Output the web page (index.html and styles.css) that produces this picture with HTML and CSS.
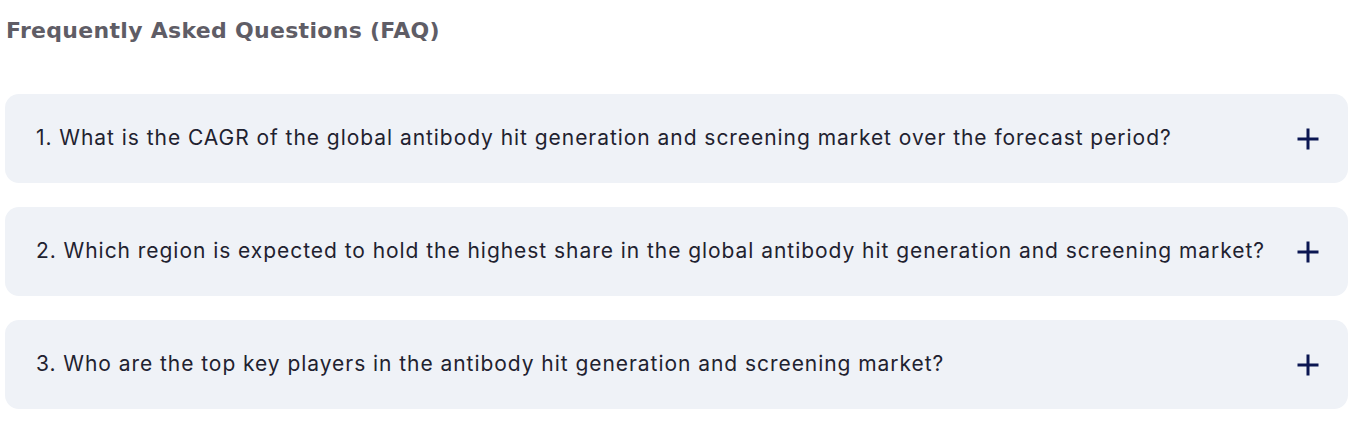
FILE: index.html
```html
<!DOCTYPE html>
<html lang="en">
<head>
    <meta charset="UTF-8">
    <meta name="viewport" content="width=device-width, initial-scale=1.0">
    <title>Frequently Asked Questions</title>
    <link rel="stylesheet" href="styles.css">
</head>
<body>
    <div class="faq">
        <h2 class="faq-title">Frequently Asked Questions (FAQ)</h2>

        <div class="faq-list">
            <div class="faq-item">
                <p class="faq-question">1. What is the CAGR of the global antibody hit generation and screening market over the forecast period?</p>
                <svg class="faq-icon" width="22" height="22" viewBox="0 0 22 22"><path d="M11 0.5V21.5M0.5 11H21.5" stroke="#0b1652" stroke-width="3"/></svg>
            </div>
            <div class="faq-item">
                <p class="faq-question">2. Which region is expected to hold the highest share in the global antibody hit generation and screening market?</p>
                <svg class="faq-icon" width="22" height="22" viewBox="0 0 22 22"><path d="M11 0.5V21.5M0.5 11H21.5" stroke="#0b1652" stroke-width="3"/></svg>
            </div>
            <div class="faq-item">
                <p class="faq-question">3. Who are the top key players in the antibody hit generation and screening market?</p>
                <svg class="faq-icon" width="22" height="22" viewBox="0 0 22 22"><path d="M11 0.5V21.5M0.5 11H21.5" stroke="#0b1652" stroke-width="3"/></svg>
            </div>
        </div>
    </div>
</body>
</html>
```

FILE: styles.css
```css
body {
    margin: 0;
    padding: 0;
    background-color: #fff;
    font-family: Inter, "Open Sans", Arial, sans-serif;
}

.faq {
    padding: 13px 15px 0 5px;
}

.faq-title {
    margin: 0 0 45px 1px;
    font-family: "DejaVu Sans", Verdana, sans-serif;
    font-size: 22px;
    line-height: 36px;
    font-weight: 700;
    letter-spacing: 0.3px;
    color: #5f5d66;
}

.faq-list {
    display: flex;
    flex-direction: column;
    gap: 24px;
}

.faq-item {
    display: flex;
    align-items: center;
    justify-content: space-between;
    height: 89px;
    padding: 0 29px 0 31px;
    box-sizing: border-box;
    background-color: #eff2f7;
    border-radius: 14px;
}

.faq-question {
    margin: 0 0 2px;
    font-size: 21px;
    letter-spacing: 0.95px;
    color: #1f2230;
}

.faq-icon {
    flex-shrink: 0;
    display: block;
}
```
